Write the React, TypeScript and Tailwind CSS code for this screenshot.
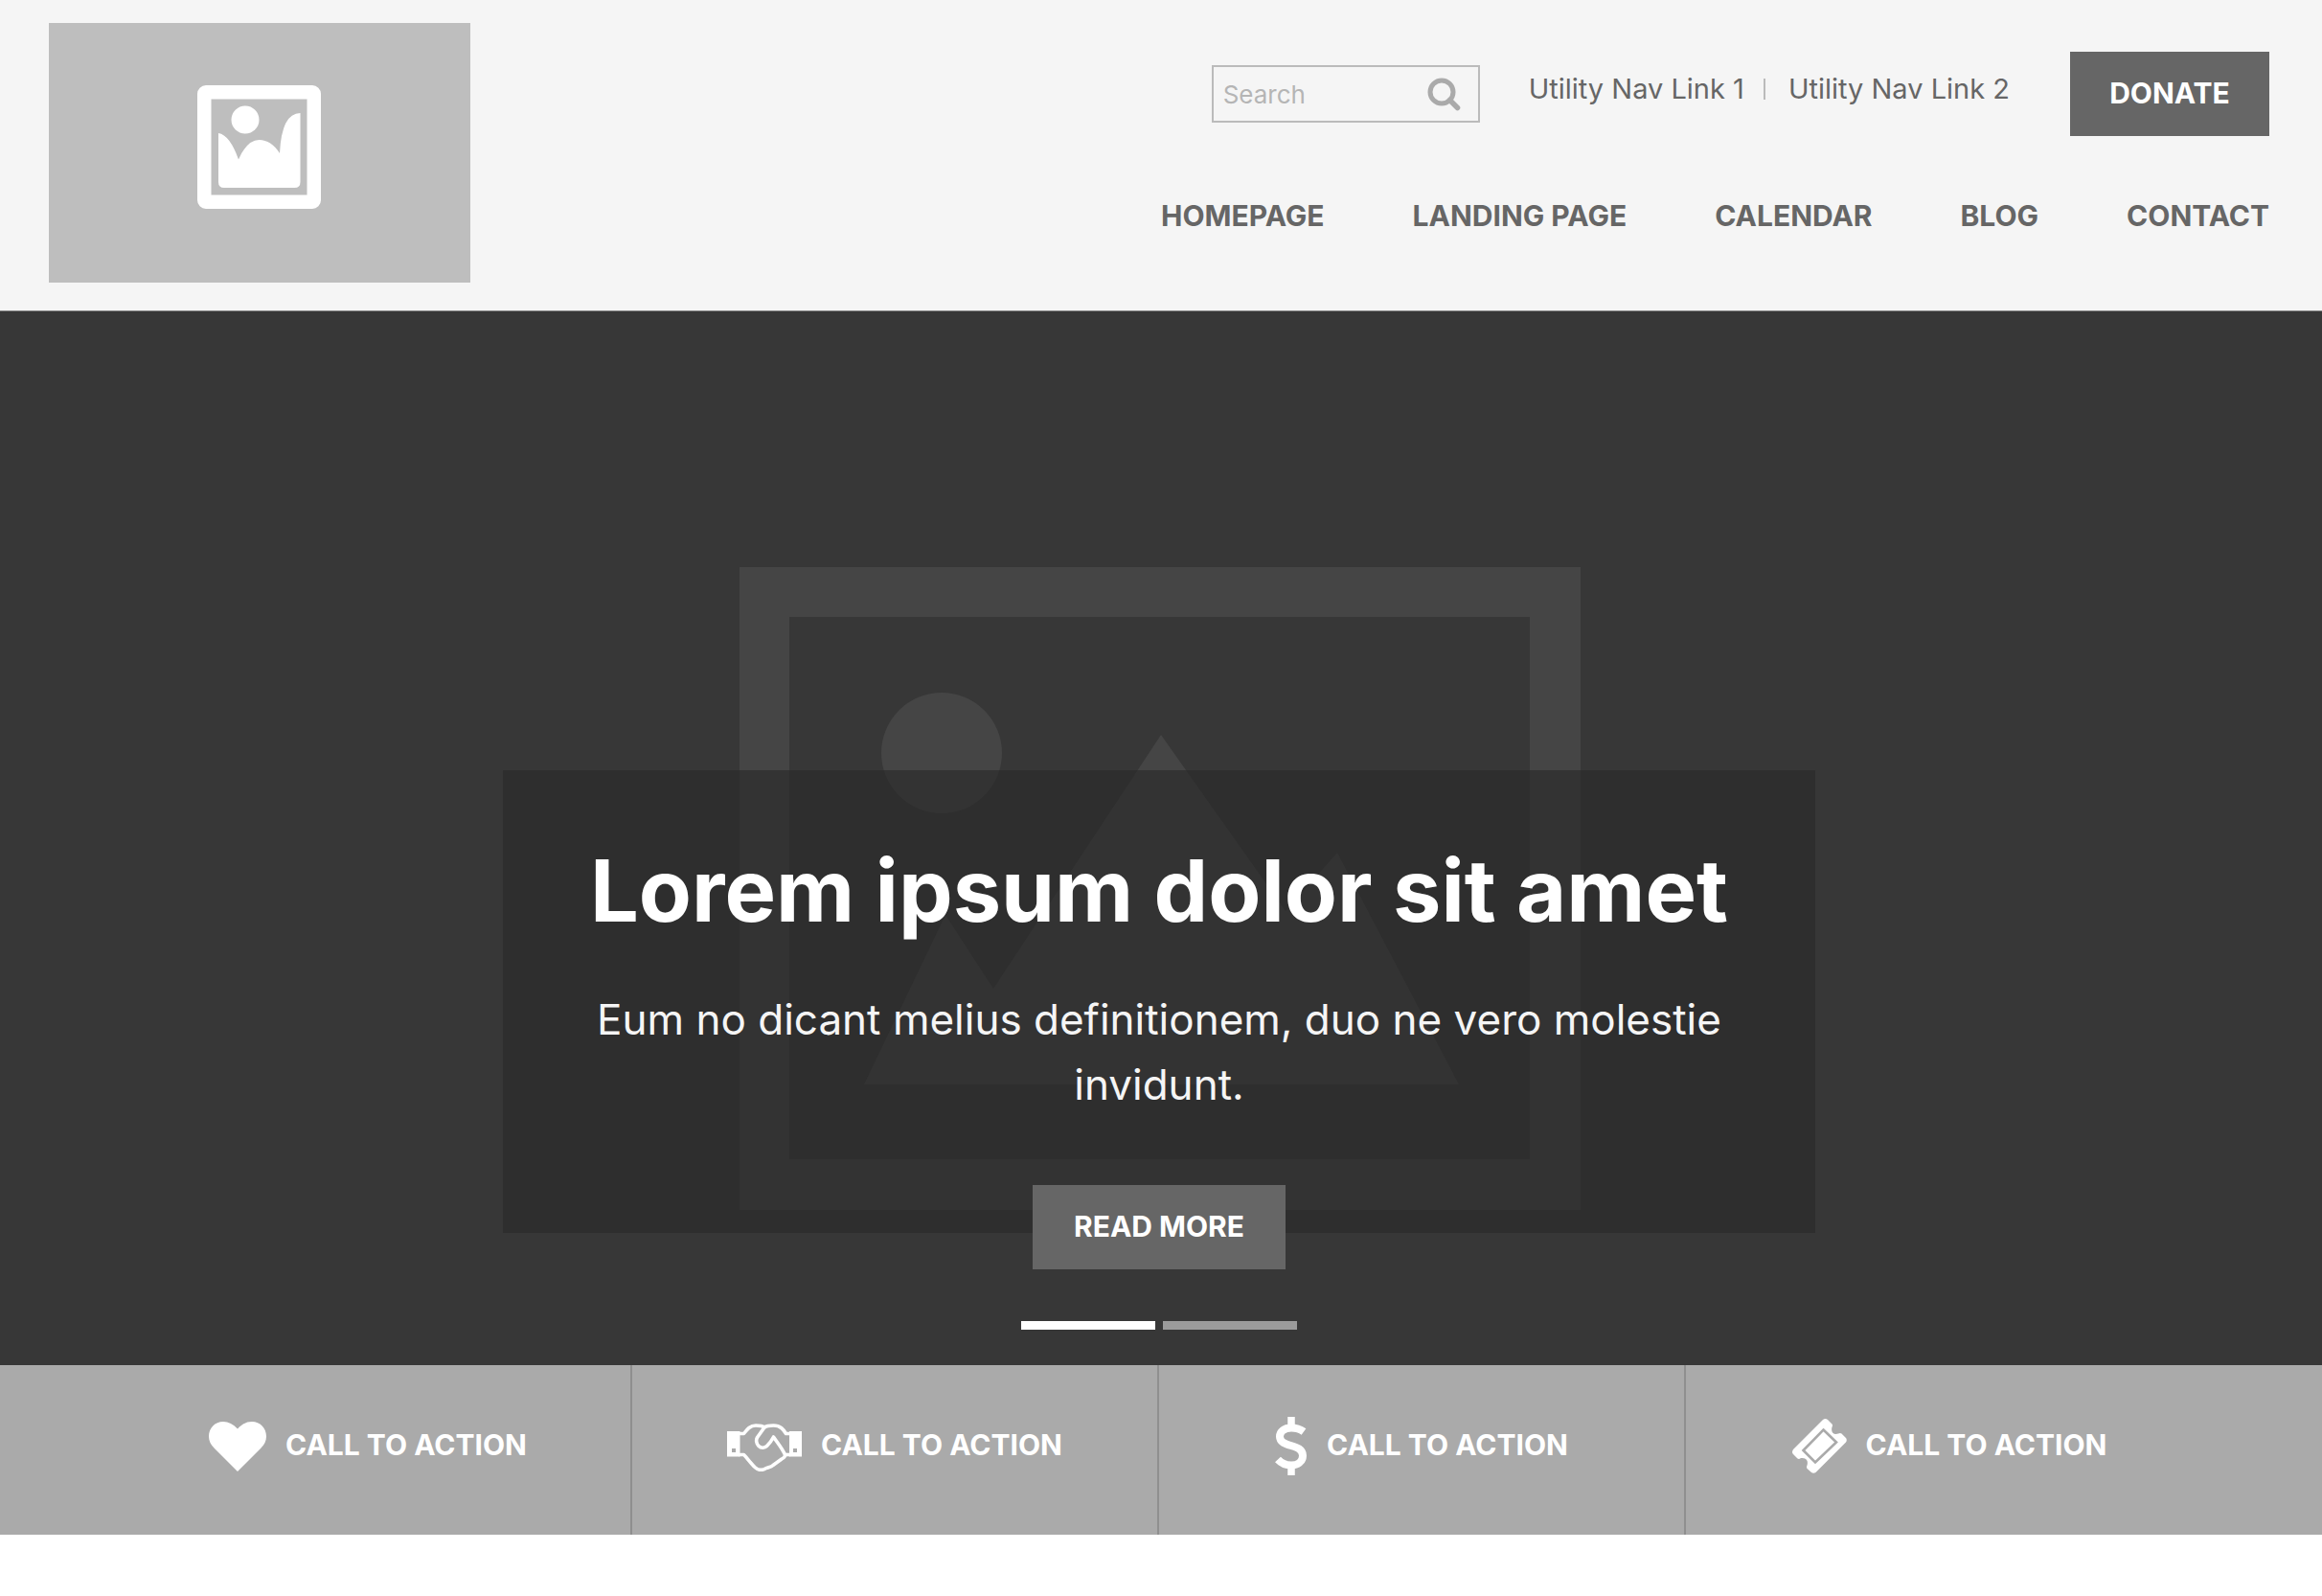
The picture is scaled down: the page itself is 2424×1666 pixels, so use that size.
import React from "react";

const navLinks = ["Homepage", "Landing Page", "Calendar", "Blog", "Contact"];

function LogoPlaceholder() {
  return (
    <a
      href="#home"
      aria-label="Home"
      className="flex h-[271px] w-[440px] shrink-0 items-center justify-center bg-[#bebebe] pr-0.5 pb-3"
    >
      <svg viewBox="0 0 129 129" className="size-[129px]" fill="#fff" aria-hidden="true">
        <path
          fillRule="evenodd"
          d="M9 0H120A9 9 0 0 1 129 9V120A9 9 0 0 1 120 129H9A9 9 0 0 1 0 120V9A9 9 0 0 1 9 0ZM14.500 14.500V114.500H114.500V14.500Z"
        />
        <circle cx="50" cy="36" r="14.500" />
        <path d="M22 50Q34 52 43 77.500Q52 57 64.500 57Q77 57 86 71Q88 29 107.500 29V101Q107.500 107 101.500 107H28Q22 107 22 101Z" />
      </svg>
    </a>
  );
}

function SearchIcon() {
  return (
    <svg viewBox="0 0 35 35" className="size-[35px]" fill="none" stroke="#aaa" aria-hidden="true">
      <circle cx="15" cy="15" r="12" strokeWidth="5" />
      <path d="M23.500 23.500L31.500 31.500" strokeWidth="5.500" strokeLinecap="round" />
    </svg>
  );
}

function HeroArt() {
  return (
    <svg viewBox="0 0 878 671" className="h-[671px] w-[878px]" fill="#454545" aria-hidden="true">
      <path fillRule="evenodd" d="M0 0H878V671H0ZM52 52V618H825V52Z" />
      <circle cx="211" cy="194" r="63" />
      <path d="M130 540L215 363L265 440L440 175L570 359L624 298L751 540Z" />
    </svg>
  );
}

function HeartIcon() {
  return (
    <svg viewBox="0 0 60 52" className="h-[52px] w-[60px]" fill="#fff" aria-hidden="true">
      <path d="M30 52L5.500 27.500C2 24 0 20 0 15.500C0 6.500 6.500 0 15 0C20.500 0 25.500 2.500 30 7.500C34.500 2.500 39.500 0 45 0C53.500 0 60 6.500 60 15.500C60 20 58 24 54.500 27.500Z" />
    </svg>
  );
}

function HandshakeIcon() {
  return (
    <svg viewBox="0 0 78 52" className="h-[52px] w-[78px]" fill="none" stroke="#fff" aria-hidden="true">
      <path
        fill="#fff"
        stroke="none"
        fillRule="evenodd"
        d="M0 10H13.500V36.500H0ZM5 28V32H9V28ZM65 10H78V36.500H65ZM69 28V32H73V28Z"
      />
      <g strokeWidth="3.600" strokeLinejoin="round">
        <path d="M12 12.500H17.500C21 8 24 4 30 4C34 4 36.500 4 39 6C41.500 4 44.500 4 48.500 4C56 4 59 8.500 61.500 12.500H66" />
        <path d="M39 6L31.500 16.500C30 19 30.500 23 33 25.500C35.500 28 39.500 27.500 41.500 25.500C44.500 22.500 47 19 48.500 16C52.500 22 57 27 60.500 34.500C61 37 59 38 57 39L48 45.500C46 47.500 43 47.500 41 48.500C37 51 33 51 29.500 48C25 44 21.500 38.500 17.500 34.500H12" />
        <path d="M60 34.500H66" />
      </g>
    </svg>
  );
}

function DollarIcon() {
  return (
    <svg viewBox="0 0 34 61" className="h-[61px] w-[34px]" fill="none" stroke="#fff" aria-hidden="true">
      <path strokeWidth="7.500" d="M17 0V11M17 50V61" />
      <path
        strokeWidth="8"
        d="M30 15.500Q24.500 11.500 17 11.500C9.500 11.500 5 15.500 5 20.500C5 33 29 27 29 40.500C29 47 23.500 50.500 17 50.500Q8.500 50.500 3 44.500"
      />
    </svg>
  );
}

function TicketIcon() {
  return (
    <svg viewBox="0 0 57 57" className="size-[57px]" aria-hidden="true">
      <path
        fill="#fff"
        d="M32 1Q34.500-1 37 1L41.500 5.500Q42.500 7 41.500 8.500C40 14 43 17 48 15.500Q50 14.500 51.500 15.500L56 20Q57.500 22 56 24.500L24.500 56Q22 57.500 20 56L15.500 52Q14.500 50.500 15.500 48.500C17 43 14 40.500 9 41Q7 42.500 5.500 41.500L1 37Q-1 35 1 32Z"
      />
      <path fill="none" stroke="#aaa" strokeWidth="2.600" d="M32.500 11.500L46 24.500L24 45.500L11.500 33Z" />
    </svg>
  );
}

const actions = [HeartIcon, HandshakeIcon, DollarIcon, TicketIcon];

export default function App() {
  return (
    <div className="min-h-screen bg-white font-['Inter',sans-serif]">
      <header className="flex items-start justify-between border-b border-[#8f8f8f] bg-[#f5f5f5] pt-6 pr-[55px] pb-[29px] pl-[51px]">
        <LogoPlaceholder />
        <div className="flex flex-col items-end pt-[30px]">
          <div className="flex items-center">
            <form
              role="search"
              onSubmit={(e) => e.preventDefault()}
              className="flex h-[60px] w-[280px] items-center justify-between border-2 border-[#bbb] pr-[18px] pl-[10px]"
            >
              <input
                type="search"
                aria-label="Search"
                placeholder="Search"
                className="w-[180px] bg-transparent text-[26px] text-[#666] outline-none placeholder:text-[#b5b5b5]"
              />
              <button type="submit" aria-label="Submit search">
                <SearchIcon />
              </button>
            </form>
            <div className="ml-[51px] flex items-center gap-5 pb-[10px] text-[29px] leading-10 text-[#666]">
              <a href="#utility-1">Utility Nav Link 1</a>
              <span className="mr-1 h-[22px] w-[2px] bg-[#bbb]" />
              <a href="#utility-2">Utility Nav Link 2</a>
            </div>
            <button
              type="button"
              className="ml-[63px] h-[88px] w-[208px] bg-[#666] pb-0.5 text-[30px] font-bold text-white uppercase"
            >
              Donate
            </button>
          </div>
          <nav aria-label="Main" className="mt-[63px]">
            <ul className="flex gap-[92px] text-[30px] leading-10 font-bold text-[#666] uppercase">
              {navLinks.map((label) => (
                <li key={label}>
                  <a href="#nav">{label}</a>
                </li>
              ))}
            </ul>
          </nav>
        </div>
      </header>

      <main>
        <section className="relative flex flex-col items-center bg-[#373737] pt-[479px] pr-1 pb-[37px]">
          <div className="absolute inset-0 flex items-start justify-center pt-[267px] pr-0.5">
            <HeroArt />
          </div>
          <div className="relative flex w-full max-w-[1370px] flex-col items-center bg-[#282828]/60 px-20 pt-[71px] text-center text-white">
            <h1 className="text-[90px] leading-[110px] font-bold">Lorem ipsum dolor sit amet</h1>
            <p className="mt-[45px] text-[44px] leading-[68px] text-[#f5f5f5]">
              Eum no dicant melius definitionem, duo ne vero molestie invidunt.
            </p>
            <button
              type="button"
              className="mt-[71px] -mb-[38px] h-[88px] w-[264px] bg-[#666] pb-0.5 text-[30px] font-bold uppercase"
            >
              Read more
            </button>
          </div>
          <div className="relative mt-[92px] flex gap-2">
            <button type="button" aria-label="Slide 1" aria-current="true" className="h-[9px] w-[140px] bg-white" />
            <button type="button" aria-label="Slide 2" className="h-[9px] w-[140px] bg-[#9b9b9b]" />
          </div>
        </section>

        <section className="bg-[#aaa] pr-1">
          <ul className="mx-auto grid max-w-[2200px] grid-cols-4 divide-x-2 divide-[#8f8f8f]">
            {actions.map((Icon, i) => (
              <li key={i}>
                <a
                  href="#action"
                  className="flex h-[177px] items-center justify-center gap-5 pb-2 text-[30px] leading-10 font-bold text-white uppercase"
                >
                  <Icon />
                  <span className="pb-1">Call to action</span>
                </a>
              </li>
            ))}
          </ul>
        </section>
      </main>
    </div>
  );
}
